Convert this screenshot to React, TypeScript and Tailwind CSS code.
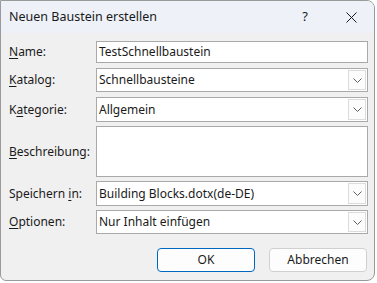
import { ReactNode } from 'react';

function Label({ pre, key_, post }: { pre: string; key_: string; post: string }) {
  return (
    <span className="w-[87px] shrink-0 whitespace-nowrap">
      {pre}
      <span className="underline underline-offset-2">{key_}</span>
      {post}
    </span>
  );
}

function Chevron() {
  return (
    <svg width="9" height="5" viewBox="0 0 9 5" fill="none">
      <path d="M0.5 0.5 L4.5 4.5 L8.5 0.5" stroke="#5f5f5f" strokeWidth="1" />
    </svg>
  );
}

function Combo({ value }: { value: string }) {
  return (
    <div className="flex h-full flex-1 items-stretch border border-[#a9a9a9] bg-white">
      <span className="flex flex-1 items-center pl-[2px] text-[#1a1a1a]">{value}</span>
      <div className="my-px mr-px flex w-[18px] items-center justify-center border border-[#dcdcdc] bg-[#fcfcfc]">
        <Chevron />
      </div>
    </div>
  );
}

function Row({ label, h, mt, children }: { label: ReactNode; h: string; mt: string; children: ReactNode }) {
  return (
    <div className={`flex items-center ${h} ${mt}`}>
      {label}
      {children}
    </div>
  );
}

export default function App() {
  return (
    <div className="h-[283px] w-[377px] bg-white" style={{ fontFamily: '"Noto Sans", "Open Sans", sans-serif' }}>
      <div className="flex h-[281px] w-[375px] flex-col overflow-hidden rounded-tr-[8px] rounded-br-[8px] rounded-bl-[6px] border border-[#9a9a9a] bg-[#f0f0f0] text-[12px] text-[#1a1a1a]">
        <div className="flex h-[32px] shrink-0 items-center bg-[#eef2f8] pl-[8px]">
          <span className="flex-1 text-[12.5px]">Neuen Baustein erstellen</span>
          <span className="w-[46px] text-center text-[13px]">?</span>
          <span className="flex w-[46px] items-center justify-center">
            <svg width="11" height="11" viewBox="0 0 11 11">
              <path d="M0.5 0.5 L10.5 10.5 M10.5 0.5 L0.5 10.5" stroke="#1a1a1a" strokeWidth="1" />
            </svg>
          </span>
        </div>
        <div className="flex flex-col pl-[8px] pr-[6px] pt-[8px]">
          <Row label={<Label pre="" key_="N" post="ame:" />} h="h-[22px]" mt="mt-0">
            <div className="flex h-full flex-1 items-center border border-[#a9a9a9] bg-white pl-[2px]">TestSchnellbaustein</div>
          </Row>
          <Row label={<Label pre="" key_="K" post="atalog:" />} h="h-[24px]" mt="mt-[5px]">
            <Combo value="Schnellbausteine" />
          </Row>
          <Row label={<Label pre="K" key_="a" post="tegorie:" />} h="h-[25px]" mt="mt-[5px]">
            <Combo value="Allgemein" />
          </Row>
          <Row label={<Label pre="" key_="B" post="eschreibung:" />} h="h-[51px]" mt="mt-[4px]">
            <div className="h-full flex-1 border border-[#a9a9a9] bg-white" />
          </Row>
          <Row label={<Label pre="Speichern " key_="i" post="n:" />} h="h-[25px]" mt="mt-[4px]">
            <Combo value="Building Blocks.dotx(de-DE)" />
          </Row>
          <Row label={<Label pre="" key_="O" post="ptionen:" />} h="h-[24px]" mt="mt-[4px]">
            <Combo value="Nur Inhalt einfügen" />
          </Row>
          <div className="mt-[14px] flex justify-end gap-[14px] pr-[1px]">
            <button className="h-[24px] w-[98px] rounded-[4px] border border-[#0067c0] bg-[#fdfdfd]">OK</button>
            <button className="h-[24px] w-[98px] rounded-[4px] border border-[#d0d0d0] bg-[#fdfdfd]">Abbrechen</button>
          </div>
        </div>
      </div>
    </div>
  );
}
